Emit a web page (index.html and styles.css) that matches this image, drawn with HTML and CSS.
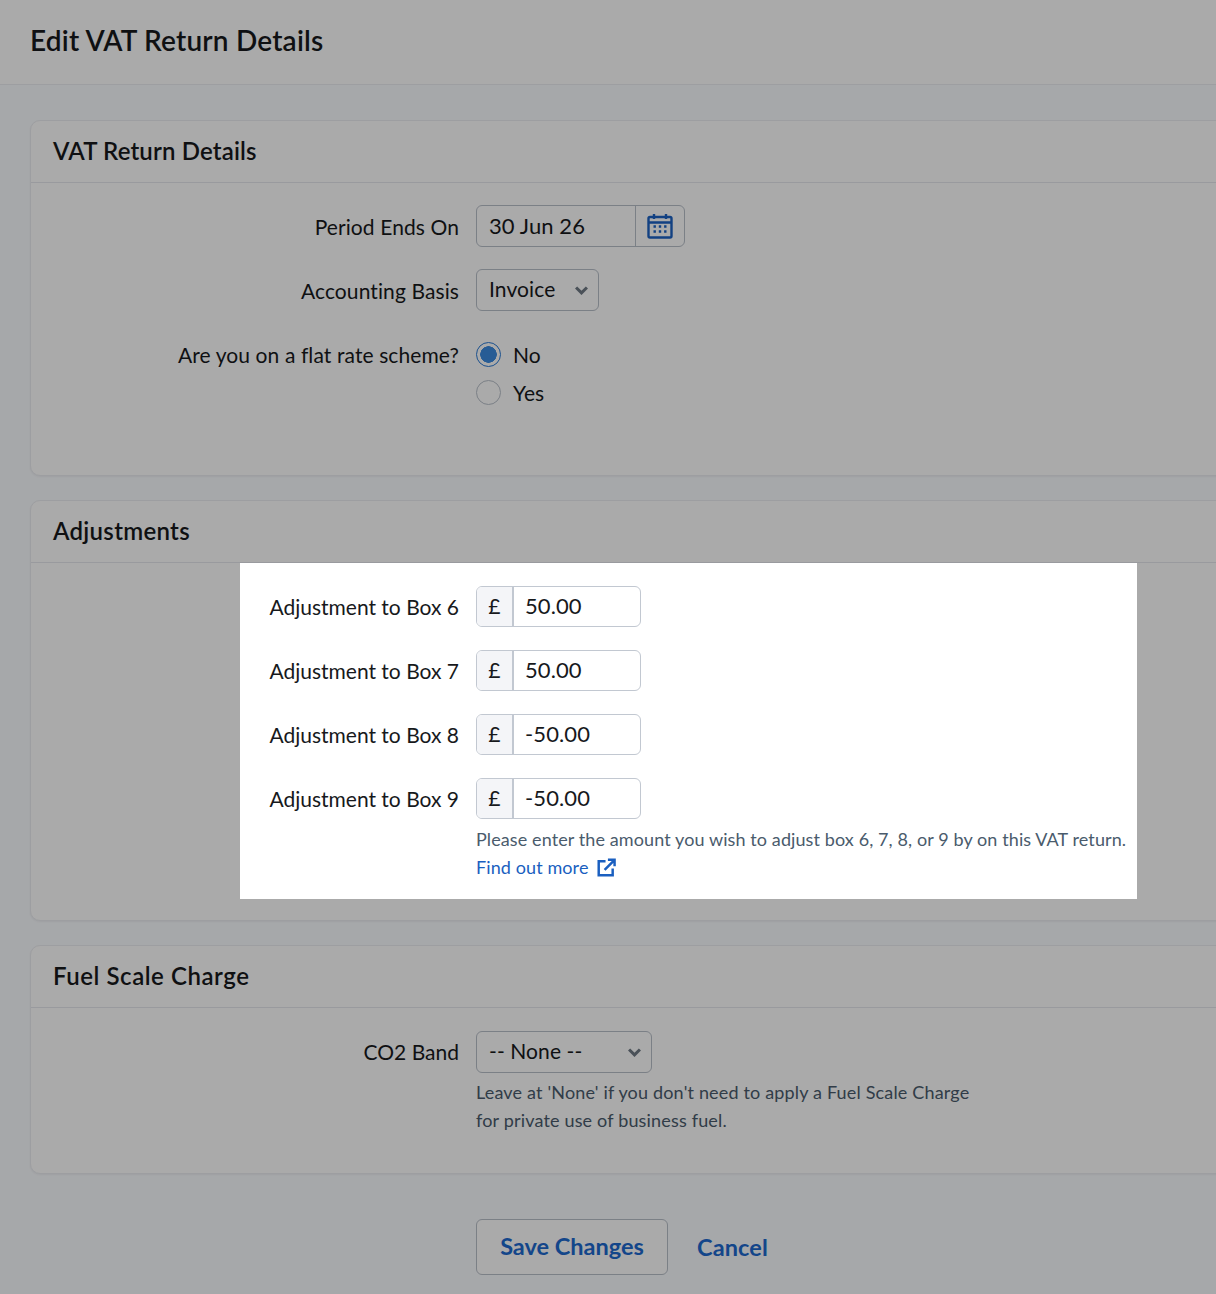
FILE: index.html
```html
<!DOCTYPE html>
<html lang="en">
<head>
<meta charset="utf-8">
<title>Edit VAT Return Details</title>
<link rel="stylesheet" href="styles.css">
</head>
<body>
<header class="page-header"><h1>Edit VAT Return Details</h1></header>
<main class="page-main">
  <section class="card card-details">
    <h2 class="card-title">VAT Return Details</h2>
    <div class="card-body">
      <div class="row">
        <label class="row-label">Period Ends On</label>
        <div class="date-field">
          <input class="date-input" type="text" value="30 Jun 26">
          <span class="date-button">
            <svg class="icon-cal" viewBox="0 0 26 26" fill="none" stroke="#1c62c4" stroke-width="2.400"><rect x="1.500" y="4" width="23" height="20.500" rx="1.500"/><path d="M1.500 9.500h23M7 1v5M19 1v5"/><path d="M6.500 13.500h2.400M11.800 13.500h2.400M17.100 13.500h2.400M6.500 18.500h2.400M11.800 18.500h2.400M17.100 18.500h2.400"/></svg>
          </span>
        </div>
      </div>
      <div class="row">
        <label class="row-label">Accounting Basis</label>
        <div class="select-wrap select-basis">
          <select class="select"><option>Invoice</option></select>
          <svg class="chevron" viewBox="0 0 12 8" fill="none" stroke="#6f7a85" stroke-width="2.800"><path d="M1 1.200l5 5 5-5"/></svg>
        </div>
      </div>
      <div class="row row-radio">
        <label class="row-label">Are you on a flat rate scheme?</label>
        <div class="radio-list">
          <label class="radio-item"><input class="radio" type="radio" name="flat" checked><span>No</span></label>
          <label class="radio-item"><input class="radio" type="radio" name="flat"><span>Yes</span></label>
        </div>
      </div>
    </div>
  </section>

  <section class="card card-adjust">
    <h2 class="card-title">Adjustments</h2>
    <div class="card-body">
      <div class="row row-money">
        <label class="row-label">Adjustment to Box 6</label>
        <div class="money"><span class="money-sign">£</span><input class="money-input" type="text" value="50.00"></div>
      </div>
      <div class="row row-money">
        <label class="row-label">Adjustment to Box 7</label>
        <div class="money"><span class="money-sign">£</span><input class="money-input" type="text" value="50.00"></div>
      </div>
      <div class="row row-money">
        <label class="row-label">Adjustment to Box 8</label>
        <div class="money"><span class="money-sign">£</span><input class="money-input" type="text" value="-50.00"></div>
      </div>
      <div class="row row-money">
        <label class="row-label">Adjustment to Box 9</label>
        <div class="field-stack">
          <div class="money"><span class="money-sign">£</span><input class="money-input" type="text" value="-50.00"></div>
          <p class="help help-adjust">Please enter the amount you wish to adjust box 6, 7, 8, or 9 by on this VAT return.</p>
          <a class="more" href="#">Find out more
            <svg class="icon-ext" viewBox="0 0 20 20" fill="none" stroke="#1a5fc0" stroke-width="2.600"><path d="M9 3.500H1.800v14.700h14.700V11M8 12.500L18 2.500M11.500 1.800h7v7"/></svg>
          </a>
        </div>
      </div>
    </div>
  </section>

  <section class="card card-fuel">
    <h2 class="card-title">Fuel Scale Charge</h2>
    <div class="card-body">
      <div class="row row-money">
        <label class="row-label">CO2 Band</label>
        <div class="field-stack">
          <div class="select-wrap select-band">
            <select class="select"><option>-- None --</option></select>
            <svg class="chevron" viewBox="0 0 12 8" fill="none" stroke="#6f7a85" stroke-width="2.800"><path d="M1 1.200l5 5 5-5"/></svg>
          </div>
          <p class="help help-fuel">Leave at 'None' if you don't need to apply a Fuel Scale Charge<br>for private use of business fuel.</p>
        </div>
      </div>
    </div>
  </section>

  <div class="actions">
    <button class="btn-save" type="button">Save Changes</button>
    <a class="btn-cancel" href="#">Cancel</a>
  </div>
</main>
<div class="spotlight"></div>
</body>
</html>
```
FILE: styles.css
```css
* { box-sizing: border-box; }
html, body { height: 100%; overflow: hidden; }
body {
  margin: 0;
  background: #fafcff;
  color: #17191c;
  font-family: "Lato", "Liberation Sans", sans-serif;
  font-size: 21px;
  letter-spacing: .1px;
  position: relative;
}
.page-header {
  height: 85px;
  background: #fff;
  border-bottom: 1px solid #eceef2;
  padding: 0 30px;
  display: flex;
  align-items: center;
}
.page-header h1 { margin: -4px 0 0; font-size: 28px; font-weight: 600; letter-spacing: .2px; }
.page-main { padding: 35px 0 0 30px; width: 1300px; }
.card {
  background: #fff;
  border: 1px solid #eceef2;
  border-radius: 10px;
  margin-bottom: 24px;
  box-shadow: 0 1px 2px rgba(30, 40, 60, .06);
}
.card-details { height: 356px; }
.card-adjust { height: 421px; }
.card-fuel { height: 229px; }
.card-title {
  margin: 0;
  height: 62px;
  line-height: 59px;
  padding-left: 22px;
  font-size: 24px;
  font-weight: 600;
  letter-spacing: .15px;
  border-bottom: 1px solid #e6e8ee;
}
.card-adjust .card-title { letter-spacing: .3px; }
.card-fuel .card-title { letter-spacing: .55px; }
.card-body { padding-top: 22px; }
.card-adjust .card-body, .card-fuel .card-body { padding-top: 23px; }
.row {
  display: flex;
  gap: 17px;
  margin-bottom: 22px;
  align-items: flex-start;
}
.row-money { margin-bottom: 23px; }
.row-label { width: 428px; text-align: right; flex: none; padding-top: 9px; }
.row-money .row-label { padding-top: 8px; letter-spacing: 0; }
.row-radio { padding-top: 9px; }
.row-radio .row-label { padding-top: 0; }
.date-field {
  display: flex;
  width: 209px;
  height: 42px;
  border: 1px solid #b9c0ca;
  border-radius: 6px;
  overflow: hidden;
}
.date-input, .money-input, .select {
  font: inherit;
  font-size: 22px;
  letter-spacing: .1px;
  color: inherit;
  border: 0;
  background: transparent;
  outline: 0;
  padding: 0 12px 2px;
  min-width: 0;
  width: 100%;
  height: 100%;
}
.money-input { padding-left: 11px; }
.date-button {
  flex: none;
  width: 49px;
  border-left: 1px solid #b9c0ca;
  display: flex;
  align-items: center;
  justify-content: center;
}
.icon-cal { width: 26px; height: 26px; }
.select-wrap {
  position: relative;
  height: 42px;
  border: 1px solid #b9c0ca;
  border-radius: 6px;
}
.select-basis { width: 123px; }
.select-band { width: 176px; }
.select { appearance: none; -webkit-appearance: none; font-size: 21px; padding-bottom: 3px; }
.chevron { position: absolute; right: 10px; top: 16px; width: 13px; height: 9px; pointer-events: none; }
.radio-list { display: flex; flex-direction: column; gap: 13px; }
.radio-item { display: flex; align-items: center; gap: 12px; height: 25px; }
.radio {
  appearance: none;
  -webkit-appearance: none;
  margin: 0;
  width: 25px;
  height: 25px;
  border: 1px solid #b9c0ca;
  border-radius: 50%;
  background: #fff;
}
.radio:checked {
  border: 1.500px solid #2a7ad6;
  background: radial-gradient(circle, #3b8ae0 0 8px, #fff 8.500px);
}
.money {
  display: flex;
  width: 165px;
  height: 41px;
  border: 1px solid #c2c8d1;
  border-radius: 6px;
  overflow: hidden;
}
.money-sign {
  flex: none;
  width: 37px;
  padding-bottom: 2px;
  background: #f4f5f8;
  border-right: 2px solid #c2c8d1;
  display: flex;
  align-items: center;
  justify-content: center;
}
.field-stack { display: flex; flex-direction: column; align-items: flex-start; }
.help { margin: 0; font-size: 18px; line-height: 28px; letter-spacing: .1px; color: #4a5b6c; white-space: nowrap; }
.help-adjust { margin-top: 6px; }
.help-fuel { margin-top: 5px; letter-spacing: .17px; }
.more { font-size: 18px; line-height: 28px; letter-spacing: .1px; color: #1a5fc0; text-decoration: none; display: flex; align-items: center; gap: 8px; }
.icon-ext { width: 19px; height: 19px; }
.actions { display: flex; align-items: center; gap: 29px; padding: 21px 0 0 446px; }
.btn-save {
  font: inherit;
  font-weight: 700;
  font-size: 23.500px;
  color: #1d69cf;
  width: 192px;
  height: 56px;
  padding-bottom: 3px;
  background: #fff;
  border: 1.500px solid #b9c0ca;
  border-radius: 6px;
}
.btn-cancel { font-size: 23.500px; font-weight: 700; color: #1d69cf; text-decoration: none; padding-bottom: 1px; }
.spotlight {
  position: absolute;
  left: 240px;
  top: 563px;
  width: 897px;
  height: 336px;
  box-shadow: 0 0 0 3000px rgba(0, 0, 0, .335);
  pointer-events: none;
}
```
